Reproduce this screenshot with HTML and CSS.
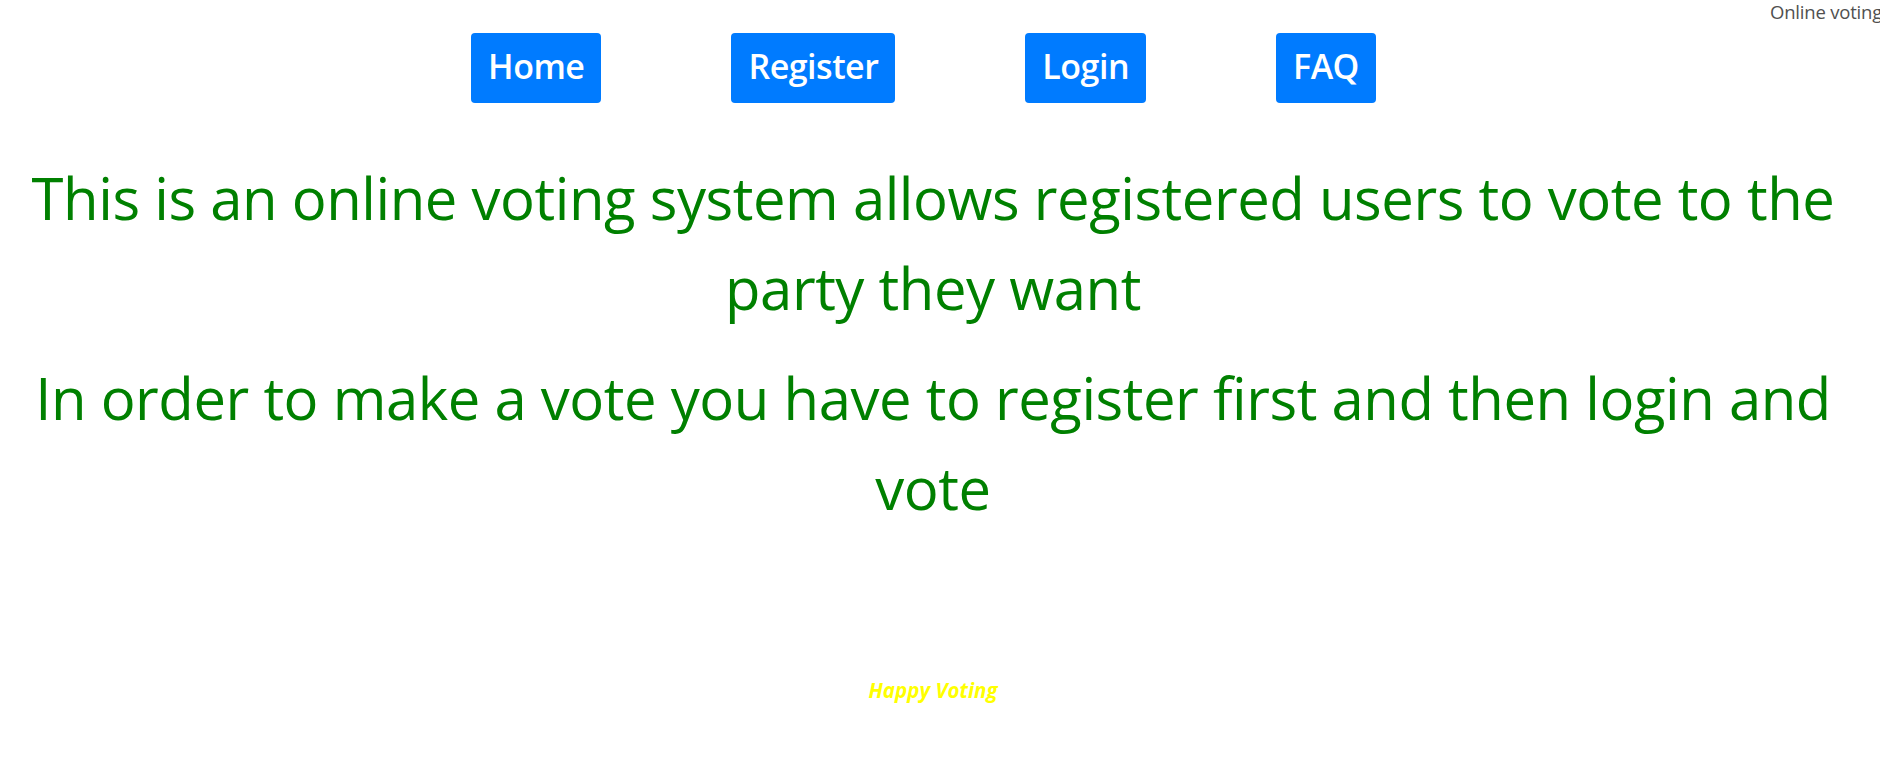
FILE: index.html
```html
<!DOCTYPE html>
<html lang="en">
<head>
<meta charset="utf-8">
<title>Online voting</title>
<link rel="stylesheet" href="styles.css">
</head>
<body>
<div class="page">
  <div class="site-title">Online voting</div>
  <nav class="nav">
    <a class="btn" href="#">Home</a>
    <a class="btn" href="#">Register</a>
    <a class="btn" href="#">Login</a>
    <a class="btn" href="#">FAQ</a>
  </nav>
  <main class="intro">
    <p class="lead">This is an online voting system allows registered users to vote to the party they want</p>
    <p class="lead">In order to make a vote you have to register first and then login and vote</p>
  </main>
  <footer class="footer">Happy Voting</footer>
</div>
</body>
</html>
```

FILE: styles.css
```css
html, body {
  margin: 0;
  padding: 0;
  background: #ffffff;
  overflow: hidden;
}

body {
  font-family: "Open Sans", "Noto Sans", sans-serif;
}

.page {
  position: relative;
  width: 1850px;
  height: 773px;
  margin: 0 8px;
}

.site-title {
  position: absolute;
  top: -1px;
  left: 1762px;
  white-space: nowrap;
  font-size: 18.5px;
  line-height: 26px;
  letter-spacing: -0.2px;
  color: #505050;
}

.nav {
  display: flex;
  justify-content: center;
  gap: 130px;
  padding: 33px 19px 0 0;
}

.btn {
  display: block;
  height: 70px;
  padding: 0 17px 3px;
  box-sizing: border-box;
  background: #007bff;
  color: #ffffff;
  border-radius: 4px;
  text-decoration: none;
  font-size: 34px;
  font-weight: 600;
  line-height: 67px;
  letter-spacing: -0.5px;
}

.intro {
  margin-top: 50px;
  text-align: center;
  color: #008000;
}

.lead {
  margin: 0 0 20px;
  font-size: 58px;
  line-height: 90px;
  letter-spacing: -0.45px;
}

.footer {
  margin-top: 143px;
  text-align: center;
  color: #ffff00;
  font-size: 20.5px;
  font-weight: 700;
  font-style: italic;
  line-height: 28px;
}
```
